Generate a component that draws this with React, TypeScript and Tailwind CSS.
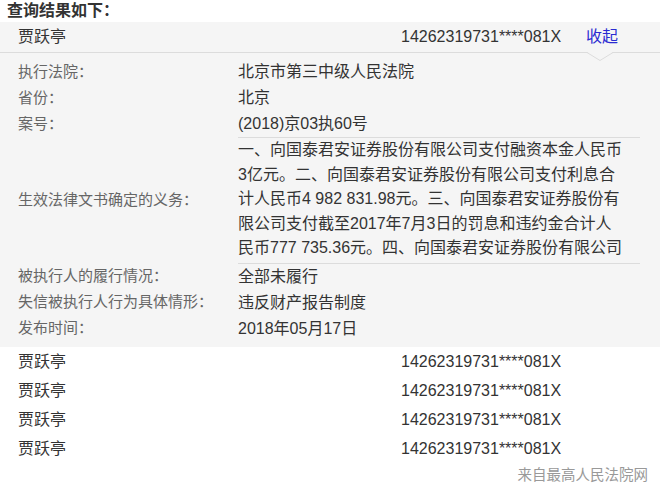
const FONT = {
  fontFamily: '"Liberation Sans", Arial, "Noto Sans CJK SC", sans-serif',
};

const ID = "14262319731****081X";

const topRows = [
  { label: "执行法院：", value: "北京市第三中级人民法院" },
  { label: "省份：", value: "北京" },
  { label: "案号：", value: "(2018)京03执60号" },
];

const dutyLines = [
  "一、向国泰君安证券股份有限公司支付融资本金人民币",
  "3亿元。二、向国泰君安证券股份有限公司支付利息合",
  "计人民币4 982 831.98元。三、向国泰君安证券股份有",
  "限公司支付截至2017年7月3日的罚息和违约金合计人",
  "民币777 735.36元。四、向国泰君安证券股份有限公司",
];

const bottomRows = [
  { label: "被执行人的履行情况：", value: "全部未履行" },
  { label: "失信被执行人行为具体情形：", value: "违反财产报告制度" },
  { label: "发布时间：", value: "2018年05月17日" },
];

const others = ["贾跃亭", "贾跃亭", "贾跃亭", "贾跃亭"];

function DetailRow({ label, value }: { label: string; value: string }) {
  return (
    <div className="flex items-center h-[26px]">
      <div className="w-[220px] text-[15px] text-[#666]">{label}</div>
      <div className="text-[16px] text-[#333]">{value}</div>
    </div>
  );
}

export default function App() {
  return (
    <div className="w-[660px] h-[490px] bg-white overflow-hidden" style={FONT}>
      <div className="h-[22px] pl-[7px] text-[16px] font-bold text-[#333] leading-[21px]">
        查询结果如下：
      </div>

      {/* 展开的记录 */}
      <div className="relative flex items-center h-[31px] pl-[18px] bg-[#f5f5f5] border-b border-[#dcdcdc] text-[16px] text-[#333]">
        <div className="w-[383px]">贾跃亭</div>
        <div className="w-[185px]">{ID}</div>
        <button className="text-[#2b2bd1] text-[16px]">收起</button>
        <svg
          className="absolute left-[587px] top-[30px]"
          width="26"
          height="10"
          viewBox="0 0 26 10"
        >
          <polygon points="0,0 26,0 13,8.5" fill="#f5f5f5" />
          <polyline
            points="0,0.5 13,8.5 26,0.5"
            fill="none"
            stroke="#dcdcdc"
            strokeWidth="1"
          />
        </svg>
      </div>

      <div className="bg-[#f5f5f5] pl-[18px] pt-[6px] pb-[5px]">
        {topRows.map((r) => (
          <DetailRow key={r.label} {...r} />
        ))}

        <div className="flex items-center">
          <div className="w-[220px] text-[15px] text-[#666]">生效法律文书确定的义务：</div>
          <div className="w-[402px] border-y border-[#dcdcdc] pb-[2px] text-[16px] text-[#333] leading-[24.5px]">
            {dutyLines.map((l) => (
              <div key={l} className="whitespace-nowrap">
                {l}
              </div>
            ))}
          </div>
        </div>

        {bottomRows.map((r) => (
          <DetailRow key={r.label} {...r} />
        ))}
      </div>

      <div className="pt-[1px]">
        {others.map((name, i) => (
          <div
            key={i}
            className="flex items-center h-[29px] pl-[18px] text-[16px] text-[#333]"
          >
            <div className="w-[383px]">{name}</div>
            <div>{ID}</div>
          </div>
        ))}
      </div>

      <div className="flex justify-end pr-[12px] pt-[1px] text-[14.5px] text-[#999]">
        来自最高人民法院网
      </div>
    </div>
  );
}
